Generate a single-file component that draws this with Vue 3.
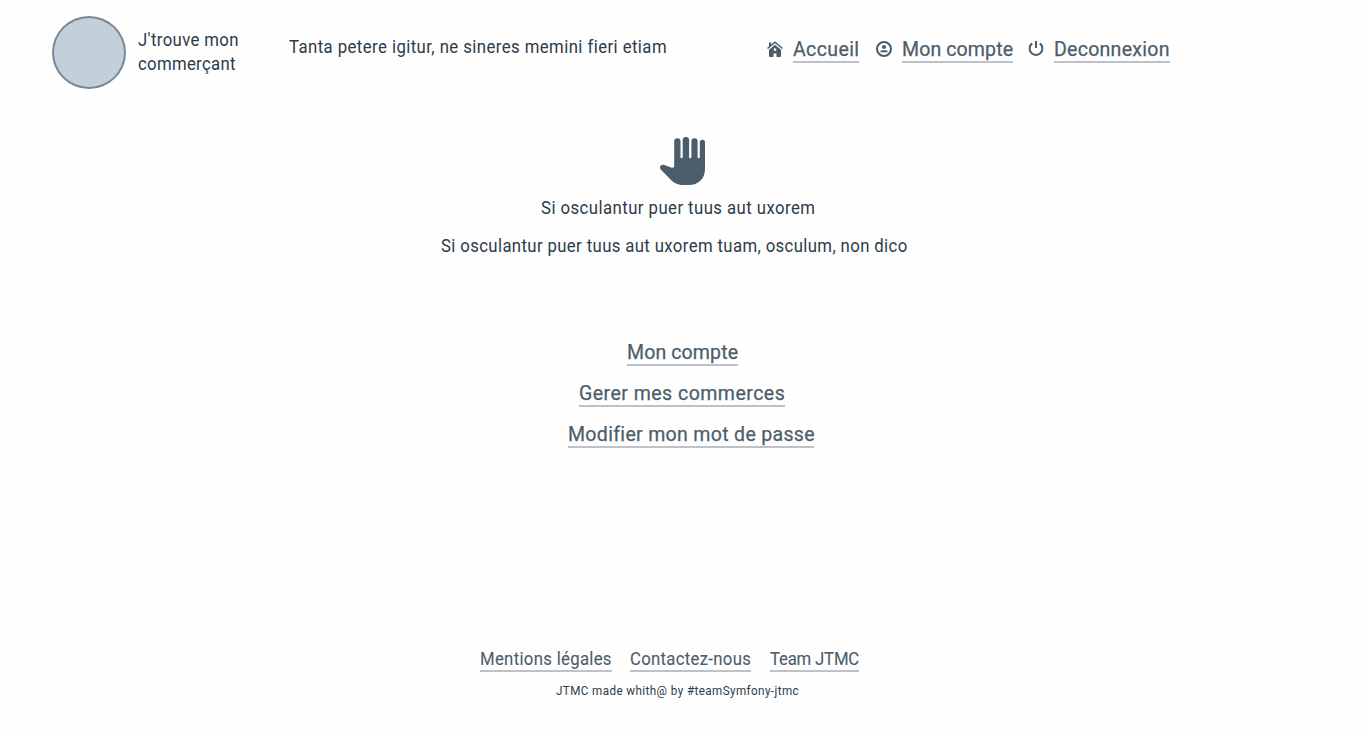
<script setup>
const nav = [
  { icon: 'home', label: 'Accueil', cls: 'n1' },
  { icon: 'user', label: 'Mon compte', cls: 'n2' },
  { icon: 'power', label: 'Deconnexion', cls: 'n3' },
]
const actions = [
  { label: 'Mon compte', cls: 'a1' },
  { label: 'Gerer mes commerces', cls: 'a2' },
  { label: 'Modifier mon mot de passe', cls: 'a3' },
]
const legal = [
  { label: 'Mentions légales', cls: 'f1' },
  { label: 'Contactez-nous', cls: 'f2' },
  { label: 'Team JTMC', cls: 'f3' },
]
</script>

<template>
  <div class="page">
    <header class="header">
      <div class="logo"></div>
      <div class="brand"><span class="b1">J'trouve mon</span><br /><span class="b2">commerçant</span></div>
      <p class="tagline"><span>Tanta petere igitur, ne sineres memini fieri etiam</span></p>
      <nav class="nav">
        <div v-for="item in nav" :key="item.label" class="nav-item" :class="item.cls">
          <svg v-if="item.icon === 'home'" class="icon" viewBox="0 0 16 16">
            <path d="M2 1.500h2.200v2.800L2 6z" fill="currentColor" />
            <path d="M.5 7.500 8 1.200 15.500 7.500" fill="none" stroke="currentColor" stroke-width="1.500" />
            <path fill-rule="evenodd" d="M8 3.800 14 8.800V15q0 1-1 1H9.500v-3.500h-3V16H3q-1 0-1-1V8.800zM8 7.200a1.400 1.400 0 1 0 0 2.800 1.400 1.400 0 0 0 0-2.800z" fill="currentColor" />
          </svg>
          <svg v-else-if="item.icon === 'user'" class="icon" viewBox="0 0 16 16">
            <circle cx="8" cy="8" r="7" fill="none" stroke="currentColor" stroke-width="2" />
            <circle cx="8" cy="6" r="2.100" fill="currentColor" />
            <path d="M4.200 11.300q0-2 2-2h3.600q2 0 2 2z" fill="currentColor" />
          </svg>
          <svg v-else class="icon" viewBox="0 0 16 16">
            <path d="M4.200 2.400a6.400 6.400 0 1 0 7.600 0M8 0v7" fill="none" stroke="currentColor" stroke-width="2" />
          </svg>
          <a class="link"><span>{{ item.label }}</span></a>
        </div>
      </nav>
    </header>

    <main class="main">
      <svg class="hand" viewBox="0 0 45 48">
        <path
          fill="currentColor"
          d="M14.2 29.5V4.3a3.1 3.1 0 0 1 6.3 0V20.2q0 1.1 1.1 1.1t1.1-1.1V3.1a3.2 3.2 0 0 1 6.4 0V20.2q0 1.1 1.1 1.1t1.2-1.1V4.4a3.1 3.1 0 0 1 6.2 0V20.2q0 1.1 1.1 1.1t1.1-1.1V5.4a2.6 2.6 0 0 1 5.2 0V32C45 42 38 48 29 48H23.5C17 48 13.5 45.800 9.500 41.500L.8 32.400C-1.300 29.900 1 27 4.500 28L11.700 30.700Q13.600 31.200 14.200 29.500z"
        />
      </svg>
      <p class="p1"><span>Si osculantur puer tuus aut uxorem</span></p>
      <p class="p2"><span>Si osculantur puer tuus aut uxorem tuam, osculum, non dico</span></p>
      <div class="actions">
        <a v-for="item in actions" :key="item.label" class="link" :class="item.cls"><span>{{ item.label }}</span></a>
      </div>
    </main>

    <footer class="footer">
      <div class="legal">
        <a v-for="item in legal" :key="item.label" class="link small" :class="item.cls"><span>{{ item.label }}</span></a>
      </div>
      <p class="credit"><span>JTMC made whith@ by #teamSymfony-jtmc</span></p>
    </footer>
  </div>
</template>

<style>
body {
  background: #fefefe;
}
</style>

<style scoped>
.page {
  box-sizing: border-box;
  height: 732px;
  overflow: hidden;
  display: flex;
  flex-direction: column;
  background: #fefefe;
  color: #2b3b4a;
  font-family: Roboto, "Liberation Sans", sans-serif;
  font-size: 18px;
  line-height: 24px;
  white-space: nowrap;
}
p {
  margin: 0;
}
span {
  display: inline-block;
  transform: scaleX(0.93);
  transform-origin: left;
}
.header {
  display: flex;
  align-items: flex-start;
  padding: 16px 0 0 52px;
  height: 121px;
  box-sizing: border-box;
}
.logo {
  box-sizing: border-box;
  width: 74px;
  height: 73px;
  border: 2px solid #778899;
  border-radius: 50%;
  background: #c3cfd9;
}
.brand {
  width: 151px;
  padding: 12px 0 0 12px;
  box-sizing: border-box;
  margin-right: 12px;
}
.b1 { letter-spacing: 0.4px; }
.b2 { letter-spacing: 0.33px; }
.tagline {
  width: 478px;
  padding-top: 19px;
  letter-spacing: 0.46px;
}
.nav {
  display: flex;
  padding-top: 19px;
}
.nav-item {
  display: flex;
  color: #4b5d6b;
}
.icon {
  width: 16px;
  height: 16px;
  margin: 6px 10px 0 0;
}
.link {
  box-sizing: border-box;
  display: block;
  height: 28px;
  border-bottom: 2px solid #bdc1c8;
  color: #4b5d6b;
  font-size: 21px;
  line-height: 28px;
  -webkit-text-stroke: 0.25px currentColor;
}
.n1 .link { width: 66px; margin-right: 17px; letter-spacing: 0.4px; }
.n2 .link { width: 111px; margin-right: 15px; letter-spacing: 0.12px; }
.n3 .link { width: 116px; letter-spacing: 0.28px; }
.main {
  display: flex;
  flex-direction: column;
  align-items: flex-start;
  padding-top: 16px;
  height: 512px;
  box-sizing: border-box;
}
.hand {
  width: 45px;
  height: 48px;
  margin-left: 660px;
  color: #4b5d6b;
}
.p1 {
  margin: 11px 0 0 541px;
  letter-spacing: 0.48px;
}
.p2 {
  margin: 14px 0 0 441px;
  letter-spacing: 0.4px;
}
.actions {
  display: flex;
  flex-direction: column;
  gap: 13px;
  margin-top: 80px;
}
.a1 { width: 111px; margin-left: 627px; letter-spacing: 0.12px; }
.a2 { width: 206px; margin-left: 579px; letter-spacing: 0.5px; }
.a3 { width: 246px; margin-left: 568px; letter-spacing: 0.34px; }
.footer {
  padding-top: 14px;
}
.legal {
  display: flex;
  padding-left: 480px;
}
.small {
  height: 25px;
  font-size: 18px;
  line-height: 23px;
  -webkit-text-stroke-width: 0.1px;
}
.f1 { width: 132px; margin-right: 18px; letter-spacing: 0.33px; }
.f2 { width: 121px; margin-right: 19px; letter-spacing: 0.32px; }
.f3 { width: 89px; letter-spacing: -0.2px; }
.credit {
  margin: 10px 0 0 556px;
  font-size: 12px;
  line-height: 18px;
  letter-spacing: 0.43px;
}
.credit span {
  transform: scaleX(0.97);
}
</style>
